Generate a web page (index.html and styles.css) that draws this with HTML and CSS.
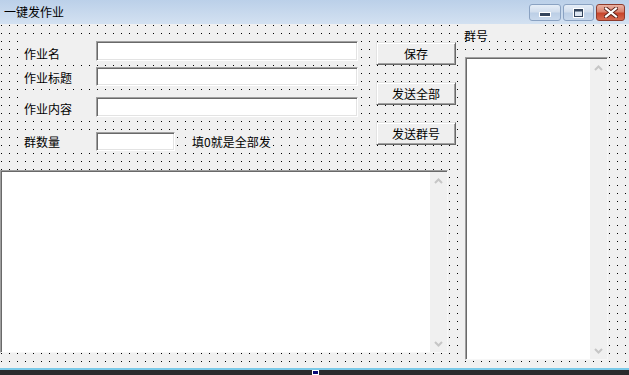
FILE: index.html
```html
<!DOCTYPE html>
<html lang="zh-CN">
<head>
<meta charset="utf-8">
<title>一键发作业</title>
<link rel="stylesheet" href="styles.css">
</head>
<body>
<div class="window">
  <div class="titlebar">
    <span class="title">一键发作业</span>
    <div class="caption-buttons">
      <span class="cap cap-min"><svg width="12" height="5" viewBox="0 0 12 5"><rect x="0.5" y="0.5" width="11" height="4" fill="#33445c" stroke="#ffffff"/></svg></span>
      <span class="cap cap-max"><svg width="11" height="10" viewBox="0 0 11 10"><rect x="0.5" y="0.5" width="10" height="9" fill="#ffffff" stroke="#ffffff"/><rect x="1.5" y="1.5" width="8" height="7" fill="#dde6f1" stroke="#33445c"/><rect x="2" y="2" width="7" height="1.5" fill="#33445c"/></svg></span>
      <span class="cap cap-close"><svg width="14" height="11" viewBox="0 0 14 11"><path d="M2 1.5 L12 9.5 M12 1.5 L2 9.5" stroke="#5a2118" stroke-width="4" stroke-linecap="square"/><path d="M2 1.5 L12 9.5 M12 1.5 L2 9.5" stroke="#ffffff" stroke-width="2.2" stroke-linecap="square"/></svg></span>
    </div>
  </div>
  <div class="client">
    <div class="left">
      <div class="top">
        <div class="fields">
          <div class="row r1"><span class="lbl">作业名</span><span class="edit wide"></span></div>
          <div class="row r2"><span class="lbl">作业标题</span><span class="edit wide"></span></div>
          <div class="row r3"><span class="lbl">作业内容</span><span class="edit wide"></span></div>
          <div class="row r4"><span class="lbl">群数量</span><span class="edit narrow"></span><span class="hint">填0就是全部发</span></div>
        </div>
        <div class="buttons">
          <span class="btn">保存</span>
          <span class="btn">发送全部</span>
          <span class="btn">发送群号</span>
        </div>
      </div>
      <div class="box memo">
        <div class="box-inner">
          <div class="box-body"></div>
          <div class="vscroll">
            <span class="arrow"><svg width="9" height="6" viewBox="0 0 9 6"><polyline points="1,5 4.5,1.5 8,5" fill="none" stroke="#c6c6c6" stroke-width="2"/></svg></span>
            <span class="arrow"><svg width="9" height="6" viewBox="0 0 9 6"><polyline points="1,1 4.5,4.5 8,1" fill="none" stroke="#c6c6c6" stroke-width="2"/></svg></span>
          </div>
        </div>
      </div>
    </div>
    <div class="right">
      <span class="group-lbl">群号</span>
      <div class="box listbox">
        <div class="box-inner">
          <div class="box-body"></div>
          <div class="vscroll">
            <span class="arrow"><svg width="9" height="6" viewBox="0 0 9 6"><polyline points="1,5 4.5,1.5 8,5" fill="none" stroke="#c6c6c6" stroke-width="2"/></svg></span>
            <span class="arrow"><svg width="9" height="6" viewBox="0 0 9 6"><polyline points="1,1 4.5,4.5 8,1" fill="none" stroke="#c6c6c6" stroke-width="2"/></svg></span>
          </div>
        </div>
      </div>
    </div>
  </div>
  <div class="taskbar"><span class="handle"></span></div>
</div>
</body>
</html>
```

FILE: styles.css
```css
* { box-sizing: border-box; }
html, body { margin: 0; padding: 0; }
body {
  width: 629px;
  height: 375px;
  overflow: hidden;
  background: #f0f0f0;
  color: #000;
  font-family: "Noto Sans CJK SC", "Noto Sans", sans-serif;
  font-size: 12px;
}
.window {
  display: flex;
  flex-direction: column;
  width: 629px;
  height: 375px;
}

/* title bar */
.titlebar {
  flex: none;
  height: 24px;
  display: flex;
  justify-content: space-between;
  align-items: flex-start;
  padding-left: 4px;
  background: linear-gradient(#bbd0e9, #d3e1f1);
}
.title {
  line-height: 14px;
  margin-top: 5px;
}
.caption-buttons {
  display: flex;
  gap: 2px;
  margin-top: 4px;
  margin-right: 4px;
}
.cap {
  height: 17px;
  border-radius: 3px;
  display: flex;
  align-items: center;
  justify-content: center;
}
.cap-min, .cap-max {
  border: 1px solid #8aa2c2;
  background: linear-gradient(#e6eef8 0%, #d2deed 45%, #bccfe6 55%, #c9d9ec 100%);
}
.cap-min { width: 32px; align-items: flex-end; padding-bottom: 3px; }
.cap-max { width: 31px; }
.cap-close {
  width: 29px;
  border: 1px solid #8e3b2c;
  background: linear-gradient(#eab3a4 0%, #d98370 45%, #c8452c 55%, #d46a51 100%);
}

/* client area with designer grid */
.client {
  flex: none;
  height: 344px;
  display: flex;
  background-color: #f0f0f0;
  background-image: conic-gradient(at 1px 1px, transparent 75%, #000 0);
  background-size: 8px 8px;
  background-position: 1px 1px;
}
.left {
  flex: none;
  width: 456px;
  display: flex;
  flex-direction: column;
}
.top {
  display: flex;
  padding: 17px 0 0 24px;
}
.fields {
  width: 334px;
  display: flex;
  flex-direction: column;
}
.row {
  display: flex;
  align-items: stretch;
}
.r1 { height: 20px; }
.r2 { height: 19px; margin-top: 6px; }
.r3 { height: 20px; margin-top: 11px; }
.r4 { height: 19px; margin-top: 15px; }
.lbl {
  width: 66px;
  margin-right: 6px;
  display: flex;
  align-items: center;
  padding-top: 3px;
  background: #f0f0f0;
  line-height: 14px;
}
.r1 .lbl { padding-top: 5px; }
.r4 .lbl { padding-top: 1px; }
.edit {
  background: #fff;
  border-top: 1px solid #a0a0a0;
  border-left: 1px solid #a0a0a0;
  border-right: 1px solid #ffffff;
  border-bottom: 1px solid #ffffff;
  box-shadow: inset 1px 1px 0 #696969, inset -1px -1px 0 #e3e3e3;
}
.wide { width: 262px; }
.narrow { width: 79px; }
.hint {
  margin-left: 17px;
  display: flex;
  align-items: center;
  padding-top: 1px;
  padding-right: 2px;
  background: #f0f0f0;
  line-height: 14px;
}
.buttons {
  margin-left: 18px;
  padding-top: 1px;
  display: flex;
  flex-direction: column;
  gap: 17px;
}
.btn {
  width: 80px;
  height: 23px;
  display: flex;
  align-items: center;
  justify-content: center;
  background: #efefef;
  border-top: 1px solid #e3e3e3;
  border-left: 1px solid #e3e3e3;
  border-right: 1px solid #696969;
  border-bottom: 1px solid #696969;
  box-shadow: inset 1px 1px 0 #ffffff, inset -1px -1px 0 #a0a0a0;
  line-height: 14px;
}

/* sunken boxes with scrollbars */
.box {
  border-top: 1px solid #a0a0a0;
  border-left: 1px solid #a0a0a0;
  border-right: 1px solid #f7f7f7;
  border-bottom: 1px solid #f7f7f7;
}
.box-inner {
  height: 100%;
  display: flex;
  border-top: 1px solid #696969;
  border-left: 1px solid #696969;
}
.box-body {
  flex: 1;
  background: #fff;
}
.vscroll {
  flex: none;
  width: 17px;
  background: #f0f0f0;
  display: flex;
  flex-direction: column;
  justify-content: space-between;
}
.arrow {
  width: 17px;
  height: 17px;
  display: flex;
  align-items: center;
  justify-content: center;
}
.memo {
  margin-top: 19px;
  width: 448px;
  height: 183px;
}
.right {
  flex: none;
  margin-left: 8px;
  display: flex;
  flex-direction: column;
  align-items: flex-start;
}
.group-lbl {
  margin-top: 1px;
  width: 78px;
  height: 16px;
  padding-top: 4px;
  line-height: 14px;
  background: #f0f0f0;
}
.listbox {
  margin-top: 16px;
  margin-left: 1px;
  width: 143px;
  height: 303px;
}

/* bottom strip */
.taskbar {
  flex: none;
  height: 7px;
  display: flex;
  align-items: flex-start;
  background: #2b2b2d;
  border-top: 2px solid #79c9e8;
}
.handle {
  margin-left: 312px;
  width: 7px;
  height: 5px;
  background: #0a0a78;
  border: 1px solid #ffffff;
}
```
